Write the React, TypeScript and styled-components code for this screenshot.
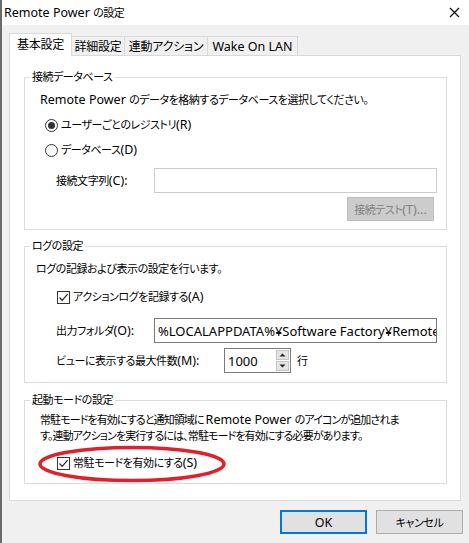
import React from "react";
import styled, { createGlobalStyle } from "styled-components";

const Global = createGlobalStyle`
  html, body { margin: 0; padding: 0; background: #f0f0f0; }
  * { box-sizing: border-box; }
  body {
    font-family: "Noto Sans", "Noto Sans CJK JP", sans-serif;
    font-size: 11px;
    letter-spacing: -0.45px;
    color: #000;
    font-feature-settings: "palt";
  }
`;

const L = styled.span`
  font-size: 12.5px;
  letter-spacing: 0;
`;

const Window = styled.div`
  position: relative;
  width: 469px;
  height: 543px;
  border-left: 2px solid #6a6a6a;
  display: flex;
  flex-direction: column;
  background: #f0f0f0;
  overflow: hidden;
`;

const TitleBar = styled.div`
  height: 25px;
  flex: none;
  background: #fff;
  display: flex;
  align-items: center;
  padding: 0 9px 0 2px;
  gap: 8px;
`;

const TitleText = styled.span`
  flex: 1;
`;

const CloseButton = styled.div`
  width: 11px;
  height: 11px;
  flex: none;
  display: flex;
  color: #111;
`;

const Body = styled.div`
  flex: 1;
  display: flex;
  flex-direction: column;
  padding: 8px 8px 0 7px;
`;

const TabStrip = styled.div`
  display: flex;
  align-items: flex-end;
  height: 23px;
  margin-bottom: -1px;
  position: relative;
  z-index: 1;
`;

const Tab = styled.div<{ $active?: boolean; $w: number }>`
  width: ${(p) => p.$w}px;
  height: ${(p) => (p.$active ? 23 : 20)}px;
  border: 1px solid #d9d9d9;
  border-bottom: ${(p) => (p.$active ? "none" : "1px solid #d9d9d9")};
  border-left: ${(p) => (p.$active ? "1px solid #d9d9d9" : "none")};
  background: ${(p) => (p.$active ? "#fff" : "#f0f0f0")};
  display: flex;
  align-items: center;
  justify-content: center;
  padding-bottom: ${(p) => (p.$active ? 2 : 0)}px;
  font-size: 12px;
  letter-spacing: -0.2px;
  white-space: nowrap;
`;

const Panel = styled.div`
  height: 446px;
  flex: none;
  background: #fff;
  border: 1px solid #d9d9d9;
  padding: 13px 13px 0 14px;
  display: flex;
  flex-direction: column;
`;

const Group = styled.fieldset<{ $mt?: number }>`
  margin: ${(p) => p.$mt ?? 0}px 0 0 0;
  padding: 0;
  border: 1px solid #dcdcdc;
  min-width: 0;
`;

const Legend = styled.legend`
  margin-left: 5px;
  padding: 0 2px;
  line-height: 16px;
`;

const GroupInner = styled.div<{ $pb: number }>`
  display: flex;
  flex-direction: column;
  padding-bottom: ${(p) => p.$pb}px;
`;

const Row = styled.div<{ $mt: number; $pl: number; $h?: number }>`
  position: relative;
  display: flex;
  align-items: center;
  margin-top: ${(p) => p.$mt}px;
  padding-left: ${(p) => p.$pl}px;
  height: ${(p) => p.$h ?? 16}px;
  line-height: 16px;
  white-space: nowrap;
`;

const TextBlock = styled.div<{ $mt: number; $pl: number; $ls?: number }>`
  margin-top: ${(p) => p.$mt}px;
  padding-left: ${(p) => p.$pl}px;
  line-height: 16px;
  white-space: nowrap;
  ${(p) => (p.$ls !== undefined ? `letter-spacing: ${p.$ls}px;` : "")}
`;

const FieldLabel = styled.span<{ $w: number }>`
  width: ${(p) => p.$w}px;
  flex: none;
`;

const TextBox = styled.div<{ $disabled?: boolean; $w: number }>`
  width: ${(p) => p.$w}px;
  height: 25px;
  border: 1px solid ${(p) => (p.$disabled ? "#cccccc" : "#7a7a7a")};
  background: #fff;
  display: flex;
  align-items: center;
  padding-left: 3px;
  overflow: hidden;
  white-space: nowrap;
  font-size: 13px;
  letter-spacing: 0;
`;

const RadioCircle = styled.span<{ $checked?: boolean }>`
  width: 13px;
  height: 13px;
  border: 1px solid #333;
  border-radius: 50%;
  display: inline-flex;
  align-items: center;
  justify-content: center;
  margin-right: 3px;
  flex: none;
  &::after {
    content: "";
    display: ${(p) => (p.$checked ? "block" : "none")};
    width: 7px;
    height: 7px;
    border-radius: 50%;
    background: #333;
  }
`;

const CheckBox = styled.span`
  width: 13px;
  height: 13px;
  border: 1px solid #333;
  display: inline-flex;
  align-items: center;
  justify-content: center;
  margin-right: 3px;
  flex: none;
  background: #fff;
`;

const ButtonRow = styled.div`
  display: flex;
  justify-content: flex-end;
  margin-top: 4px;
  padding-right: 12px;
`;

const DisabledButton = styled.div`
  width: 87px;
  height: 24px;
  background: #cccccc;
  border: 1px solid #bfbfbf;
  color: #838383;
  display: flex;
  align-items: center;
  justify-content: center;
`;

const Spin = styled.div`
  width: 67px;
  height: 25px;
  border: 1px solid #7a7a7a;
  display: flex;
  align-items: stretch;
  background: #fff;
  margin-right: 6px;
`;

const SpinValue = styled.div`
  flex: 1;
  display: flex;
  align-items: center;
  padding-left: 3px;
  font-size: 13px;
  letter-spacing: 0;
`;

const SpinButtons = styled.div`
  width: 13px;
  margin: 1px 1px 1px 0;
  display: flex;
  flex-direction: column;
  gap: 1px;
`;

const SpinBtn = styled.div`
  flex: 1;
  background: #e5e5e5;
  border: 1px solid #c4c4c4;
  display: flex;
  align-items: center;
  justify-content: center;
`;

const Ellipse = styled.svg`
  position: absolute;
  left: 11px;
  top: -11px;
  width: 194px;
  height: 42px;
  overflow: visible;
  pointer-events: none;
`;

const Footer = styled.div`
  display: flex;
  justify-content: flex-end;
  gap: 9px;
  margin-top: 9px;
  margin-right: -2px;
`;

const DialogButton = styled.div<{ $default?: boolean }>`
  width: 87px;
  height: 24px;
  background: #e1e1e1;
  border: ${(p) => (p.$default ? "2px solid #0078d7" : "1px solid #adadad")};
  display: flex;
  align-items: center;
  justify-content: center;
`;

const Check = () => (
  <svg width="11" height="11" viewBox="0 0 11 11">
    <path d="M1.5 5.5 L4.2 8.3 L9.6 2.2" fill="none" stroke="#222" strokeWidth="1.2" />
  </svg>
);

const Arrow = ({ up }: { up?: boolean }) => (
  <svg width="7" height="4" viewBox="0 0 7 4">
    <path d={up ? "M0.5 3.5 L3.5 0.5 L6.5 3.5 Z" : "M0.5 0.5 L3.5 3.5 L6.5 0.5 Z"} fill="#222" />
  </svg>
);

export default function App() {
  return (
    <>
      <Global />
      <Window>
        <TitleBar>
          <TitleText>
            <L>Remote Power </L>の設定
          </TitleText>
          <CloseButton aria-label="閉じる">
            <svg width="11" height="11" viewBox="0 0 11 11">
              <path d="M1 1 L10 10 M10 1 L1 10" fill="none" stroke="currentColor" strokeWidth="1.3" />
            </svg>
          </CloseButton>
        </TitleBar>
        <Body>
          <TabStrip>
            <Tab $active $w={63}>基本設定</Tab>
            <Tab $w={53}>詳細設定</Tab>
            <Tab $w={83}>連動アクション</Tab>
            <Tab $w={90}>
              <L>Wake On LAN</L>
            </Tab>
          </TabStrip>
          <Panel>
            <Group>
              <Legend>接続データベース</Legend>
              <GroupInner $pb={8}>
                <TextBlock $mt={7} $pl={15}>
                  <L>Remote Power </L>のデータを格納するデータベースを選択してください。
                </TextBlock>
                <Row $mt={9} $pl={20}>
                  <RadioCircle $checked />
                  ユーザーごとのレジストリ<L>(R)</L>
                </Row>
                <Row $mt={9} $pl={20}>
                  <RadioCircle />
                  データベース<L>(D)</L>
                </Row>
                <Row $mt={10} $pl={31} $h={25}>
                  <FieldLabel $w={98}>
                    接続文字列<L>(C):</L>
                  </FieldLabel>
                  <TextBox $disabled $w={283} />
                </Row>
                <ButtonRow>
                  <DisabledButton>
                    接続テスト<L>(T)...</L>
                  </DisabledButton>
                </ButtonRow>
              </GroupInner>
            </Group>
            <Group $mt={8}>
              <Legend>ログの設定</Legend>
              <GroupInner $pb={9}>
                <TextBlock $mt={7} $pl={11}>
                  ログの記録および表示の設定を行います。
                </TextBlock>
                <Row $mt={12} $pl={32}>
                  <CheckBox>
                    <Check />
                  </CheckBox>
                  アクションログを記録する<L>(A)</L>
                </Row>
                <Row $mt={13} $pl={31} $h={25}>
                  <FieldLabel $w={98}>
                    出力フォルダ<L>(O):</L>
                  </FieldLabel>
                  <TextBox $w={283}>%LOCALAPPDATA%¥Software Factory¥Remote Power</TextBox>
                </Row>
                <Row $mt={5} $pl={31} $h={25}>
                  <FieldLabel $w={168}>
                    ビューに表示する最大件数<L>(M):</L>
                  </FieldLabel>
                  <Spin>
                    <SpinValue>1000</SpinValue>
                    <SpinButtons>
                      <SpinBtn>
                        <Arrow up />
                      </SpinBtn>
                      <SpinBtn>
                        <Arrow />
                      </SpinBtn>
                    </SpinButtons>
                  </Spin>
                  行
                </Row>
              </GroupInner>
            </Group>
            <Group $mt={9}>
              <Legend>起動モードの設定</Legend>
              <GroupInner $pb={12}>
                <TextBlock $mt={4} $pl={15} $ls={-0.9}>
                  常駐モードを有効にすると通知領域に <L>Remote Power </L>のアイコンが追加されま
                  <br />
                  す。連動アクションを実行するには、常駐モードを有効にする必要があります。
                </TextBlock>
                <Row $mt={11} $pl={32}>
                  <CheckBox>
                    <Check />
                  </CheckBox>
                  常駐モードを有効にする<L>(S)</L>
                  <Ellipse viewBox="0 0 194 42">
                    <ellipse cx="96" cy="20" rx="92" ry="16.5" fill="none" stroke="#e0202a" strokeWidth="3.5" />
                  </Ellipse>
                </Row>
              </GroupInner>
            </Group>
          </Panel>
          <Footer>
            <DialogButton $default>
              <L>OK</L>
            </DialogButton>
            <DialogButton>キャンセル</DialogButton>
          </Footer>
        </Body>
      </Window>
    </>
  );
}
